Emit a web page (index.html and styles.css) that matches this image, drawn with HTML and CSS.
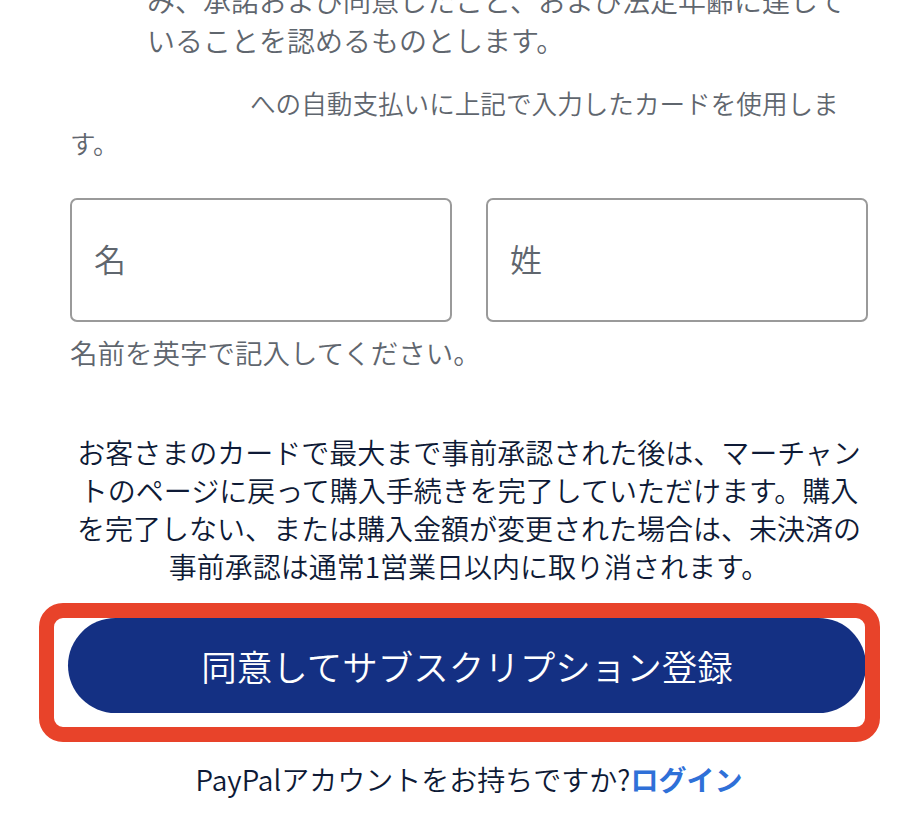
FILE: index.html
```html
<!DOCTYPE html>
<html lang="ja">
<head>
<meta charset="utf-8">
<title>サブスクリプション登録</title>
<link rel="stylesheet" href="styles.css">
</head>
<body>
<main class="page">
  <p class="consent">み、承諾および同意したこと、および法定年齢に達していることを認めるものとします。</p>
  <p class="autopay">への自動支払いに上記で入力したカードを使用します。</p>
  <div class="name-row">
    <input class="field" type="text" placeholder="名">
    <input class="field" type="text" placeholder="姓">
  </div>
  <p class="hint">名前を英字で記入してください。</p>
  <p class="notice">お客さまのカードで最大まで事前承認された後は、マーチャントのページに戻って購入手続きを完了していただけます。購入を完了しない、または購入金額が変更された場合は、未決済の事前承認は通常1営業日以内に取り消されます。</p>
  <div class="submit-wrap">
    <button class="submit" type="button">同意してサブスクリプション登録</button>
    <span class="highlight"></span>
  </div>
  <p class="login">PayPalアカウントをお持ちですか?<a class="login-link" href="#">ログイン</a></p>
</main>
</body>
</html>
```

FILE: styles.css
```css
html, body {
  margin: 0;
  padding: 0;
  background: #ffffff;
}

body {
  font-family: "Noto Sans CJK JP", "Noto Sans", sans-serif;
  font-weight: 350;
  color: #0e1a36;
  overflow: hidden;
}

.page {
  width: 798px;
  margin-left: 70px;
}

.consent {
  margin: -20px 0 0;
  padding-left: 77px;
  font-size: 28px;
  line-height: 40px;
  color: #5f666e;
}

.autopay {
  margin: 23px 0 0;
  text-indent: 180px;
  font-size: 25.6px;
  line-height: 40px;
  color: #5f666e;
}

.name-row {
  display: flex;
  gap: 34px;
  margin-top: 35px;
}

.field {
  flex: 1 1 0;
  min-width: 0;
  height: 124px;
  box-sizing: border-box;
  border: 2px solid #9a9a9a;
  border-radius: 7px;
  padding: 0 22px 4px;
  font-family: "Noto Sans CJK JP", "Noto Sans", sans-serif;
  font-weight: 350;
  font-size: 32px;
  color: #0e1a36;
  background: #ffffff;
  outline: none;
}

.field::placeholder {
  color: #5f666e;
  opacity: 1;
}

.hint {
  margin: 10px 0 0;
  font-size: 27.5px;
  line-height: 40px;
  color: #5f666e;
}

.notice {
  margin: 61px 0 0;
  font-size: 28px;
  line-height: 38px;
  text-align: center;
  color: #0e1a36;
}

.submit-wrap {
  position: relative;
  margin-top: 33px;
  margin-left: -2px;
  width: 798px;
}

.submit {
  display: block;
  width: 100%;
  height: 95px;
  border: none;
  border-radius: 48px;
  background: #143083;
  color: #ffffff;
  font-family: "Noto Sans CJK JP", "Noto Sans", sans-serif;
  font-size: 35.5px;
  font-weight: 350;
  line-height: 95px;
  padding: 0;
  cursor: pointer;
}

.highlight {
  position: absolute;
  top: -15px;
  left: -29px;
  right: -14px;
  bottom: -29px;
  border: 15px solid #e8432a;
  border-radius: 24px;
  pointer-events: none;
}

.login {
  margin: 46px 0 0;
  font-size: 28px;
  line-height: 40px;
  text-align: center;
  color: #0e1a36;
}

.login-link {
  color: #2f70d8;
  font-weight: 700;
  text-decoration: none;
}
```
